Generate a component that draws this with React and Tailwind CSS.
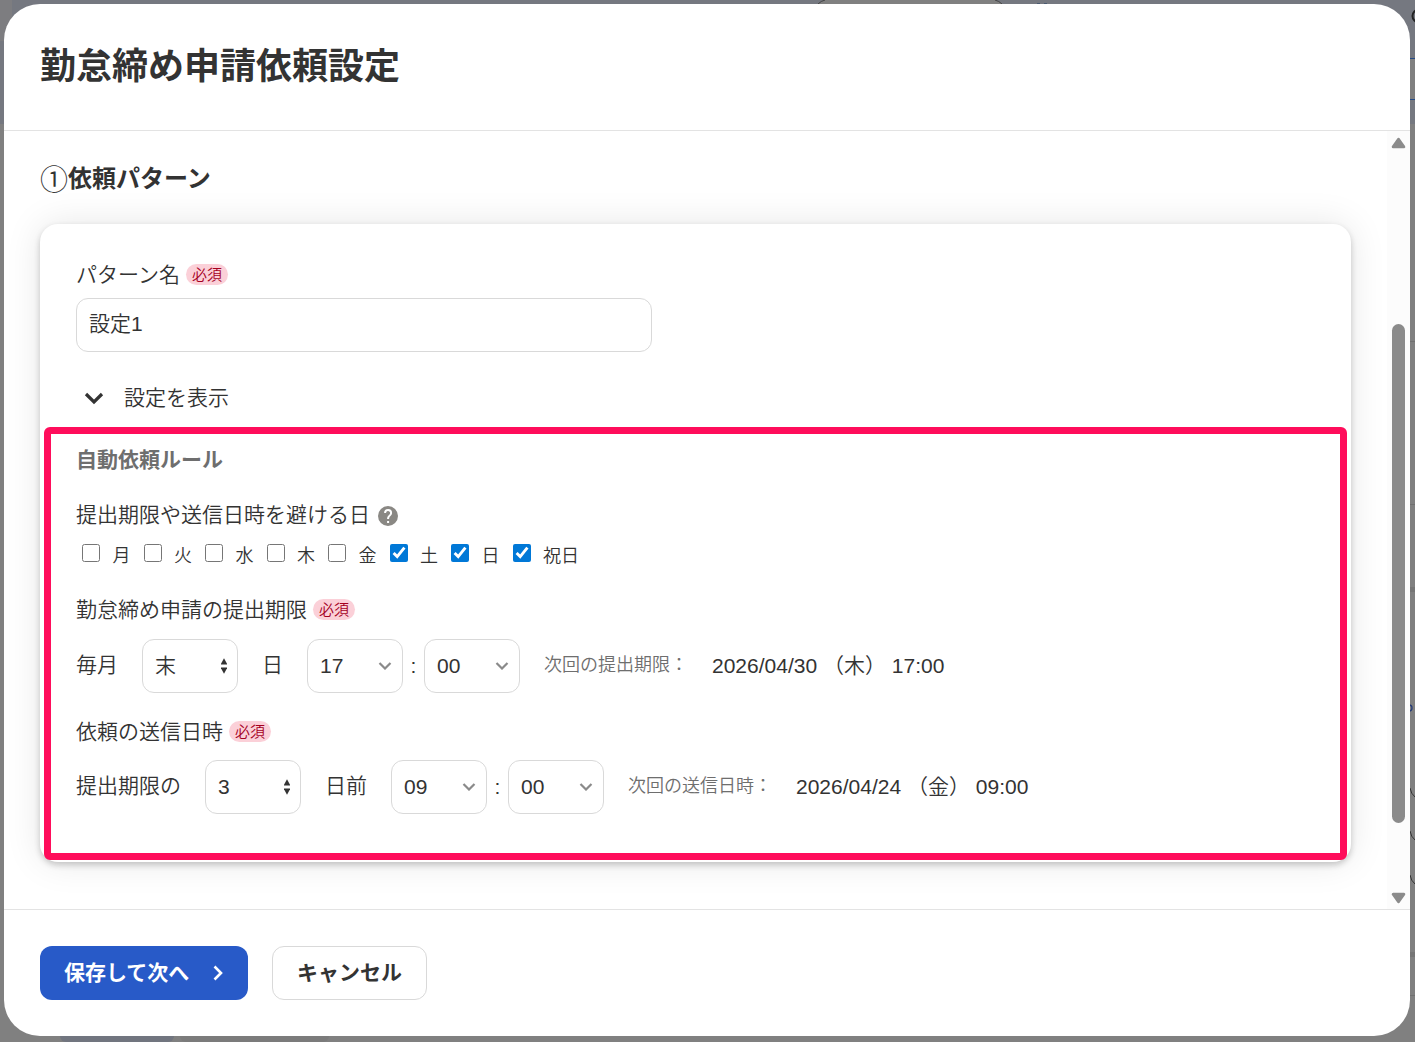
const WEEKDAYS = [
  { label: "月", checked: false },
  { label: "火", checked: false },
  { label: "水", checked: false },
  { label: "木", checked: false },
  { label: "金", checked: false },
  { label: "土", checked: true },
  { label: "日", checked: true },
  { label: "祝日", checked: true },
];

function Required() {
  return (
    <span className="ml-[6px] flex h-[21px] w-[42px] items-center justify-center rounded-full bg-[#fbd0d8] text-[15px] leading-none text-[#a5001f]">
      必須
    </span>
  );
}

function FieldLabel({ children, required }) {
  return (
    <div className="flex h-[30px] items-center">
      <span className="pt-[2px]">{children}</span>
      {required && <Required />}
    </div>
  );
}

// Day picker with up/down arrows
function StepSelect({ value }) {
  return (
    <div className="flex h-[54px] w-24 items-center justify-between rounded-[12px] border border-[#d9d9d9] bg-white pr-[10px] pl-3">
      <span className="pb-px">{value}</span>
      <svg className="h-4 w-[6px]" viewBox="0 0 6 16" fill="#333">
        <path d="M3 0.2 L6.4 6.5 H-0.4 Z" />
        <path d="M-0.4 9.5 H6.4 L3 15.8 Z" />
      </svg>
    </div>
  );
}

function TimeSelect({ value }) {
  return (
    <div className="flex h-[54px] w-24 items-center justify-between rounded-[12px] border border-[#d9d9d9] bg-white pr-[10px] pl-3">
      <span>{value}</span>
      <svg className="h-[8px] w-[14px]" viewBox="0 0 14 8" fill="none" stroke="#8a8a8a" strokeWidth="2.2">
        <path d="M1.5 1 L7 6.5 L12.5 1" />
      </svg>
    </div>
  );
}

function ScheduleRow({ before, day, after, hour, minute, nextLabel, nextDate }) {
  return (
    <div className="flex h-[54px] items-center gap-6 whitespace-nowrap">
      <span className="pb-[2px]">{before}</span>
      <StepSelect value={day} />
      <span className="pb-[2px]">{after}</span>
      <div className="flex items-center">
        <TimeSelect value={hour} />
        <span className="w-[21px] text-center">:</span>
        <TimeSelect value={minute} />
      </div>
      <span className="pb-[2px] text-[18px] text-[#6e6e6e]">{nextLabel}</span>
      <span>{nextDate}</span>
    </div>
  );
}

// Dimmed page that shows around the dialog
function Backdrop() {
  return (
    <div className="absolute inset-0 bg-[#808080]">
      <div className="h-[124px] bg-[#757880]" />
      <div className="absolute top-0 left-0 h-[41px] w-3 bg-[#7d7d80]" />
      <svg className="absolute top-0 left-[816px] h-1 w-[188px]" viewBox="0 0 188 4" fill="none">
        <path d="M2 4 Q5 1 9 0 H179 Q183 1 186 4 Z" fill="#808080" />
        <path d="M2 4 Q5 1 9 0 M179 0 Q183 1 186 4" stroke="#444" />
      </svg>
      <svg className="absolute top-[3px] left-[1037px] h-px w-[10px]" viewBox="0 0 10 1" fill="#4a5a70">
        <path d="M0 0 H3 V1 H0 Z M7 0 H10 V1 H7 Z" />
      </svg>
      <div className="absolute top-[58px] right-0 h-[42px] w-[6px] border-y border-[#234a86] bg-[#808080]" />
      <svg className="absolute top-0 right-0 h-[1042px] w-[6px]" viewBox="0 0 6 1042" fill="none">
        <circle cx="10" cy="16" r="6.5" stroke="#222" strokeWidth="2" />
        <path d="M0 341.5 H6 M0 504.5 H6 M0 995.5 H6" stroke="#707070" />
        <path d="M0 589.5 H6 M0 954.5 H6" stroke="#757575" strokeWidth="5" />
        <circle cx="0" cy="708" r="3" stroke="#263c78" strokeWidth="1.3" />
        <path d="M1 788 Q2 794 6 797 M1 831 Q2 837 6 840 M1 875 Q2 881 6 884" stroke="#333" />
      </svg>
      <div className="absolute bottom-0 left-[60px] h-[6px] w-[114px] rounded-b-lg bg-[#71757f]" />
      <div className="absolute bottom-0 left-[180px] h-[6px] w-[149px] rounded-b-lg bg-[#7b7b7b]" />
    </div>
  );
}

function Scrollbar() {
  return (
    <div className="flex w-[23px] flex-col items-center bg-[#fcfcfc] pt-[6px] pb-[5px]">
      <svg className="h-3 w-[15px]" viewBox="0 0 15 12" fill="#8b8b8b" stroke="#8b8b8b" strokeWidth="3" strokeLinejoin="round">
        <path d="M7.5 2.3 L12.8 9.8 H2.2 Z" />
      </svg>
      <div className="mt-[175px] h-[499px] w-[13px] rounded-full bg-[#8b8b8b]" />
      <svg className="mt-auto h-3 w-[15px]" viewBox="0 0 15 12" fill="#8b8b8b" stroke="#8b8b8b" strokeWidth="3" strokeLinejoin="round">
        <path d="M7.5 9.7 L12.8 2.2 H2.2 Z" />
      </svg>
    </div>
  );
}

export default function App() {
  return (
    <div className="relative h-[1042px] w-[1415px] overflow-hidden p-1 font-['Liberation_Sans','Noto_Sans_CJK_JP',sans-serif] text-[21px] leading-[30px] font-[350] text-[#333]">
      <Backdrop />

      <div className="relative flex h-[1032px] w-[1406px] flex-col overflow-hidden rounded-[36px] bg-white">
        {/* Header */}
        <div className="h-[127px] border-b border-[#e3e3e3] px-9 pt-9">
          <h1 className="text-[36px] leading-[54px] font-bold">勤怠締め申請依頼設定</h1>
        </div>

        {/* Body */}
        <div className="flex h-[778px]">
          <div className="flex-1 overflow-hidden pt-[29px] pr-9 pl-9">
            <h2 className="mb-7 flex h-9 text-[24px] leading-[36px] font-bold">
              <span className="w-[28px] pt-[3px] text-[28px] font-[350]">①</span>
              <span className="pt-px">依頼パターン</span>
            </h2>

            <div className="relative h-[638px] w-[1311px] rounded-[18px] bg-white px-9 pt-[35px] shadow-[0_3px_6px_rgba(0,0,0,0.2),0_0_36px_rgba(0,0,0,0.1)]">
              <FieldLabel required>パターン名</FieldLabel>
              <div className="mt-[9px] flex h-[54px] w-[576px] items-center rounded-[12px] border border-[#d9d9d9] px-3 pb-[2px]">
                設定1
              </div>

              <div className="mt-[31px] flex h-[30px] items-center pl-[6px]">
                <svg className="mr-[18px] size-6" viewBox="0 0 24 24" fill="none" stroke="#333" strokeWidth="3.2">
                  <path d="M4 8 L12 16 L20 8" />
                </svg>
                <span>設定を表示</span>
              </div>

              <h3 className="mt-8 font-bold text-[#6e6e6e]">自動依頼ルール</h3>

              <div className="mt-[25px] flex h-[30px] items-center">
                <span>提出期限や送信日時を避ける日</span>
                <svg className="mt-[2px] ml-2 size-5" viewBox="0 0 24 24" fill="#8a8884">
                  <path d="M12 0a12 12 0 1 0 0 24 12 12 0 0 0 0-24zm1.3 20.4h-2.4V18h2.4zm2.5-9.3-1.1 1.1c-.9.9-1.4 1.6-1.4 3.4h-2.4V15c0-1.3.5-2.5 1.4-3.4l1.5-1.5a2.4 2.4 0 1 0-4.1-1.7H7.3a4.8 4.8 0 1 1 9.6 0c0 1-.4 2-1.1 2.7z" />
                </svg>
              </div>

              <div className="mt-2 flex h-[30px] items-center gap-[13px] pl-[6px]">
                {WEEKDAYS.map(day => (
                  <label key={day.label} className="flex items-center gap-[12.5px] text-[18px]">
                    <input type="checkbox" defaultChecked={day.checked} className="size-[18px] accent-[#0078d7]" />
                    <span className="pt-[6px]">{day.label}</span>
                  </label>
                ))}
              </div>

              <div className="mt-[26px]">
                <FieldLabel required>勤怠締め申請の提出期限</FieldLabel>
              </div>
              <div className="mt-[15px]">
                <ScheduleRow
                  before="毎月"
                  day="末"
                  after="日"
                  hour="17"
                  minute="00"
                  nextLabel="次回の提出期限："
                  nextDate="2026/04/30 （木） 17:00"
                />
              </div>

              <div className="mt-[23px]">
                <FieldLabel required>依頼の送信日時</FieldLabel>
              </div>
              <div className="mt-[14px]">
                <ScheduleRow
                  before="提出期限の"
                  day="3"
                  after="日前"
                  hour="09"
                  minute="00"
                  nextLabel="次回の送信日時："
                  nextDate="2026/04/24 （金） 09:00"
                />
              </div>

              {/* Highlight frame around the auto request rules */}
              <div className="pointer-events-none absolute top-[203px] left-1 h-[433px] w-[1303px] rounded-[6px] border-[7px] border-[#ff0d5b]" />
            </div>
          </div>
          <Scrollbar />
        </div>

        {/* Footer */}
        <div className="flex flex-1 gap-6 border-t border-[#e3e3e3] px-9 pt-9 font-bold">
          <button className="flex h-[54px] w-[208px] items-center rounded-[12px] bg-[#285ac8] pl-6 text-white">
            保存して次へ
            <svg className="ml-6 h-4 w-[10px]" viewBox="0 0 10 16" fill="none" stroke="white" strokeWidth="2.6">
              <path d="M1.5 1.5 L8 8 L1.5 14.5" />
            </svg>
          </button>
          <button className="h-[54px] w-[155px] rounded-[12px] border border-[#d9d9d9] bg-white">
            キャンセル
          </button>
        </div>
      </div>
    </div>
  );
}
